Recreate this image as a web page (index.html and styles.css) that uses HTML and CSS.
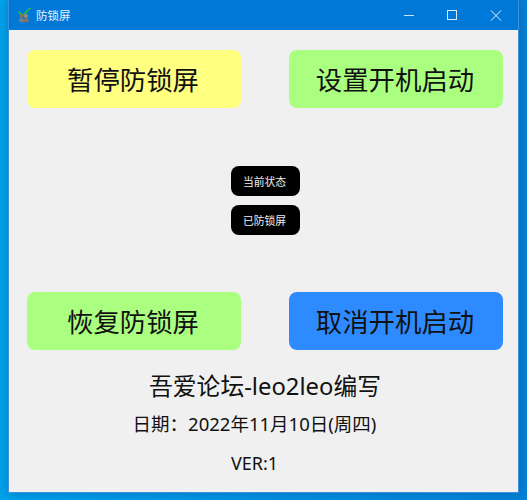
FILE: index.html
```html
<!DOCTYPE html>
<html lang="zh">
<head>
<meta charset="utf-8">
<title>防锁屏</title>
<link rel="stylesheet" href="styles.css">
</head>
<body>
<div class="window">
  <header class="titlebar">
    <svg class="app-icon" width="16" height="16" viewBox="0 0 16 16">
      <path d="M1.5 4.5 L5.5 8.5 L13.5 1" fill="none" stroke="#2fbf3a" stroke-width="1.6"/>
      <circle cx="4.5" cy="9" r="2" fill="#8c6f55"/>
      <circle cx="9" cy="9" r="2" fill="#a08a70"/>
      <path d="M1.5 15 Q2 11 4.5 11 Q7 11 7.5 15Z" fill="#6f7f8c"/>
      <path d="M6.5 15 Q7 11 9 11 Q11.5 11 12 15Z" fill="#8a6f5c"/>
    </svg>
    <span class="title">防锁屏</span>
    <div class="controls">
      <svg class="ctl" width="44" height="29" viewBox="0 0 44 29"><path d="M18 14.5 H28" stroke="#cfe4f7" fill="none"/></svg>
      <svg class="ctl" width="44" height="29" viewBox="0 0 44 29"><rect x="17.5" y="9.5" width="9" height="9" stroke="#dcebf9" fill="none"/></svg>
      <svg class="ctl" width="44" height="29" viewBox="0 0 44 29"><path d="M17 9.5 L27 19.5 M27 9.5 L17 19.5" stroke="#eaf3fc" fill="none"/></svg>
    </div>
  </header>
  <main class="content">
    <div class="row">
      <button class="btn yellow">暂停防锁屏</button>
      <button class="btn green">设置开机启动</button>
    </div>
    <div class="status">
      <div class="pill">当前状态</div>
      <div class="pill">已防锁屏</div>
    </div>
    <div class="row">
      <button class="btn green">恢复防锁屏</button>
      <button class="btn blue">取消开机启动</button>
    </div>
    <div class="author">吾爱论坛-leo2leo编写</div>
    <div class="date">日期：2022年11月10日(周四)</div>
    <div class="ver">VER:1</div>
  </main>
</div>
</body>
</html>
```
FILE: styles.css
```css
html, body { margin: 0; padding: 0; height: 500px; overflow: hidden; }
body {
  background: linear-gradient(90deg, #00a2ec 0, #0398e6 30%, #0482d8 100%);
  font-family: "Noto Sans", "Noto Sans CJK SC", sans-serif;
  color: #111;
}
.window {
  width: 511px;
  height: 493px;
  margin-left: 8px;
  box-sizing: border-box;
  border: 1px solid #3f8fdc;
  border-top: 0;
  background: #f0f0f0;
  display: flex;
  flex-direction: column;
  box-shadow: 0 0 10px rgba(0, 50, 110, .35);
}
.titlebar {
  height: 30px;
  background: #0078d7;
  display: flex;
  align-items: center;
  flex: none;
  color: #e6f1fb;
  font-size: 11.5px;
}
.app-icon { margin-left: 8px; margin-right: 3px; margin-top: -1px; }
.title { flex: 1; }
.controls { display: flex; }
.ctl { display: block; }
.content { flex: 1; display: flex; flex-direction: column; align-items: center; padding: 20px 0 0; }
.row { display: flex; width: 100%; box-sizing: border-box; padding: 0 15px 0 18px; justify-content: space-between; }
.btn {
  border: 0;
  padding: 0 2px 2px 0;
  width: 214px;
  height: 58px;
  border-radius: 8px;
  font: 26.4px "Noto Sans", "Noto Sans CJK SC", sans-serif;
  color: #111;
}
.yellow { background: #ffff80; }
.green { background: #aaff80; }
.blue { background: #2e8bff; }
.status { display: flex; flex-direction: column; gap: 9px; margin: 58px 0 57px 4px; }
.pill {
  width: 69px;
  height: 30px;
  border-radius: 8px;
  background: #000;
  color: #eee;
  font-size: 10.8px;
  padding: 0 2px 1px 0;
  box-sizing: border-box;
  display: flex;
  align-items: center;
  justify-content: center;
}
.author { font-size: 23.8px; margin: 21px 0 0 3px; line-height: 30px; }
.date { font-size: 18.5px; margin: 10px 18px 0 0; line-height: 26px; }
.ver { font-size: 18px; margin: 13px 18px 0 0; line-height: 26px; }
```
